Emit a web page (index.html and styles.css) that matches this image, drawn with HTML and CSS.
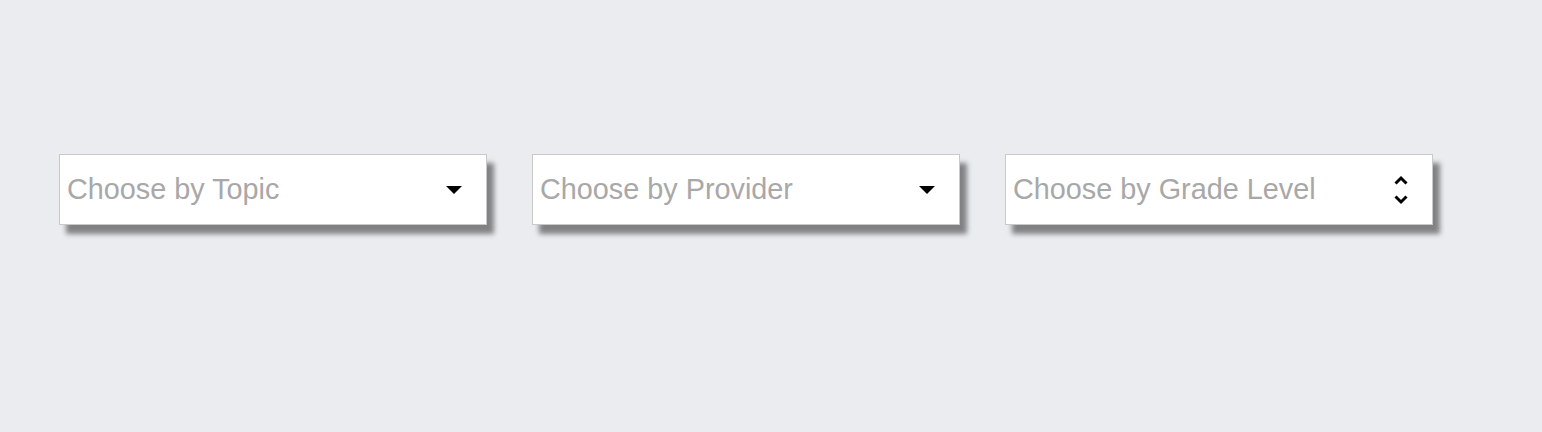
FILE: index.html
```html
<!DOCTYPE html>
<html lang="en">

<head>
    <meta charset="UTF-8">
    <meta name="viewport" content="width=device-width, initial-scale=1.0">
    <title>Filters</title>
    <link rel="stylesheet" href="styles.css">
</head>

<body>
    <div class="filters">
        <!-- topic -->
        <div class="picker">
            <span class="placeholder">Choose by Topic</span>
            <svg class="caret" width="16" height="8" viewBox="0 0 16 8">
                <path d="M0 0 L16 0 L8 8 Z" fill="#000" />
            </svg>
        </div>

        <!-- provider -->
        <div class="picker">
            <span class="placeholder">Choose by Provider</span>
            <svg class="caret" width="16" height="8" viewBox="0 0 16 8">
                <path d="M0 0 L16 0 L8 8 Z" fill="#000" />
            </svg>
        </div>

        <!-- grade level -->
        <div class="picker">
            <span class="placeholder">Choose by Grade Level</span>
            <svg class="updown" width="16" height="32" viewBox="0 0 16 32">
                <path d="M2.5 9.5 L8 4 L13.5 9.5" fill="none" stroke="#000" stroke-width="3" />
                <path d="M2.5 22.5 L8 28 L13.5 22.5" fill="none" stroke="#000" stroke-width="3" />
            </svg>
        </div>
    </div>
</body>

</html>
```

FILE: styles.css
```css
body {
    font-family: "Liberation Sans", Arial, sans-serif;
    background-color: #ebecf0;
    margin: 0;
    padding: 0;
}

.filters {
    display: flex;
    gap: 45px;
    padding: 154px 0 40px 59px;
}

.picker {
    box-sizing: border-box;
    width: 428px;
    height: 71px;
    display: flex;
    align-items: center;
    justify-content: space-between;
    padding: 0 23px 0 7px;
    background-color: #fff;
    border: 1px solid #c9c9c9;
    box-shadow: 7px 9px 5px rgba(0, 0, 0, 0.45);
}

.placeholder {
    font-size: 28.8px;
    color: #a8a8a8;
}

.caret {
    margin-right: 1px;
}

.updown {
    margin-right: 0;
}
```
